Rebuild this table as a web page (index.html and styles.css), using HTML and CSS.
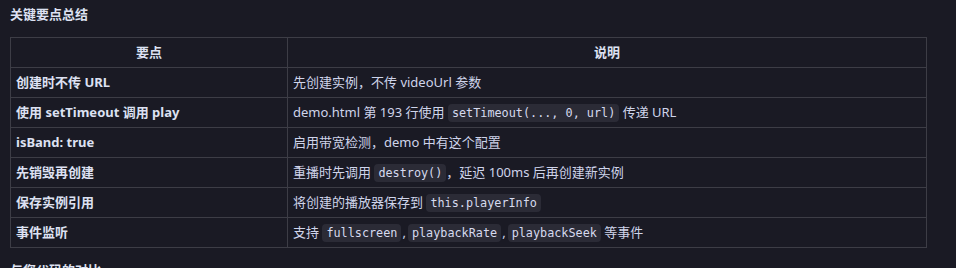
FILE: index.html
```html
<!DOCTYPE html>
<html lang="zh">
<head>
<meta charset="utf-8">
<link rel="stylesheet" href="styles.css">
</head>
<body>
<div class="doc">
  <h3 class="title">关键要点总结</h3>
  <table class="summary">
    <thead>
      <tr><th class="col-key">要点</th><th>说明</th></tr>
    </thead>
    <tbody>
      <tr><td class="key">创建时不传 URL</td><td>先创建实例，不传 videoUrl 参数</td></tr>
      <tr><td class="key">使用 setTimeout 调用 play</td><td>demo.html 第 193 行使用 <code>setTimeout(..., 0, url)</code> 传递 URL</td></tr>
      <tr><td class="key">isBand: true</td><td>启用带宽检测，demo 中有这个配置</td></tr>
      <tr><td class="key">先销毁再创建</td><td>重播时先调用 <code>destroy()</code>，延迟 100ms 后再创建新实例</td></tr>
      <tr><td class="key">保存实例引用</td><td>将创建的播放器保存到 <code>this.playerInfo</code></td></tr>
      <tr><td class="key">事件监听</td><td>支持 <code>fullscreen</code><span class="sep">,</span><code>playbackRate</code><span class="sep">,</span><code>playbackSeek</code> 等事件</td></tr>
    </tbody>
  </table>
  <h3 class="title next">与您代码的对比</h3>
</div>
</body>
</html>
```
FILE: styles.css
```css
html, body {
  margin: 0;
  padding: 0;
  background: #1a1a24;
}
body {
  font-family: "Noto Sans", "Noto Sans CJK SC", sans-serif;
  font-size: 13px;
  color: #cfd4ea;
  overflow: hidden;
}
.doc {
  padding: 4px 29px 0 10px;
}
.title {
  margin: 0 0 13px;
  font-size: 13px;
  line-height: 20px;
  font-weight: 700;
  color: #dde1f2;
}
.title.next {
  margin-top: 12px;
}
.summary {
  width: 917px;
  border-collapse: collapse;
  border: 1px solid #3d3d46;
}
.summary th,
.summary td {
  border: 1px solid #3d3d46;
  padding: 0 5px;
  line-height: 19px;
  height: 30px;
  box-sizing: border-box;
  text-align: left;
  vertical-align: middle;
  white-space: nowrap;
}
.summary th {
  text-align: center;
  font-weight: 700;
  color: #dde1f2;
}
.summary .col-key {
  width: 277px;
}
.summary .key {
  font-weight: 700;
  color: #dde1f2;
}
.sep {
  margin: 0 2px 0 1px;
}
code {
  font-family: "DejaVu Sans Mono", monospace;
  font-size: 11.8px;
  line-height: 1;
  background: #2b2b36;
  color: #d6daee;
  padding: 2px 4px;
  border-radius: 4px;
}
```
